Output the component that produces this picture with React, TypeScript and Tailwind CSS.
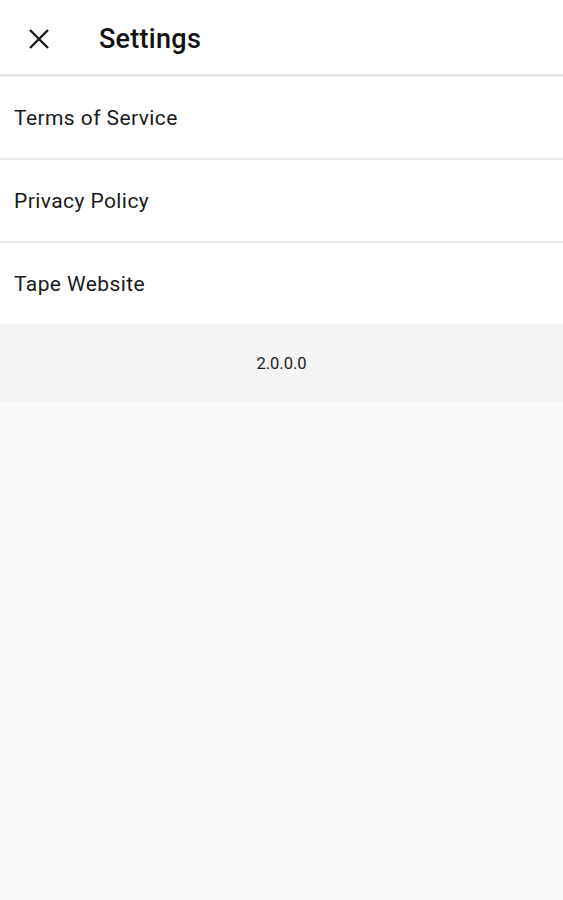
export default function App() {
  const items = ['Terms of Service', 'Privacy Policy', 'Tape Website'];

  return (
    <div className="min-h-[900px] bg-[#fafafa] font-['Roboto',sans-serif] text-[#1a1a1a]">
      {/* Header */}
      <div className="flex h-[74px] items-center bg-white pt-[4px]">
        <button className="ml-[27px] flex h-6 w-6 items-center justify-center">
          <svg width="22" height="22" viewBox="0 0 22 22" fill="none">
            <path d="M2 2L20 20M20 2L2 20" stroke="#1a1a1a" strokeWidth="2.4" />
          </svg>
        </button>
        <h1 className="ml-[48px] -mt-[4px] pt-[4px] text-[27px] font-medium tracking-[0.01em] text-[#111]">Settings</h1>
      </div>
      <div className="h-[3px] bg-gradient-to-b from-[#dedede] to-[#f0f0f0]" />

      {/* Links */}
      <ul className="bg-white">
        {items.map((item, i) => (
          <li
            key={item}
            className={
              i < items.length - 1
                ? 'flex h-[83px] items-center border-b-2 border-[#ececec] pl-[14px] pt-[3px] text-[21px] tracking-[0.02em]'
                : 'flex h-[81px] items-center pl-[14px] pt-[3px] text-[21px] tracking-[0.02em]'
            }
          >
            {item}
          </li>
        ))}
      </ul>

      {/* Version */}
      <div className="flex h-[78px] items-center justify-center bg-[#f4f4f4] pt-[3px] text-[16.5px] text-[#222]">
        2.0.0.0
      </div>
    </div>
  );
}
